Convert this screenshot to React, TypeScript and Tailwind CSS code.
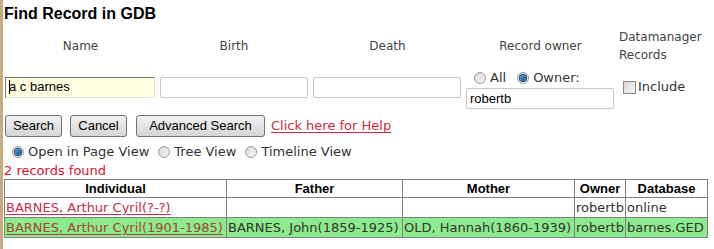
import React from 'react';

const verdana = "font-['DejaVu_Sans',Verdana,sans-serif]";
const arial = "font-['Liberation_Sans',Arial,sans-serif]";

function Radio({ checked }: { checked?: boolean }) {
  return (
    <span className="inline-flex h-[12px] w-[12px] shrink-0 items-center justify-center rounded-full border border-[#9a9a9a] bg-gradient-to-br from-[#d8d8d8] to-[#f8f8f8]">
      {checked && <span className="h-[6px] w-[6px] rounded-full bg-gradient-to-br from-[#5aa0d8] to-[#0b4f8a] ring-1 ring-[#1c3e66]" />}
    </span>
  );
}

function Btn({ children, w }: { children: React.ReactNode; w: string }) {
  return (
    <button className={`${w} h-[22px] rounded-[3px] border border-[#707070] bg-gradient-to-b from-[#f2f2f2] to-[#d6d6d6] text-[13px] text-black ${arial}`}>
      {children}
    </button>
  );
}

const rows = [
  { ind: 'BARNES, Arthur Cyril(?-?)', father: '', mother: '', owner: 'robertb', db: 'online', green: false },
  {
    ind: 'BARNES, Arthur Cyril(1901-1985)',
    father: 'BARNES, John(1859-1925)',
    mother: 'OLD, Hannah(1860-1939)',
    owner: 'robertb',
    db: 'barnes.GED',
    green: true,
  },
];

export default function App() {
  return (
    <div className="flex h-[249px] w-[714px] overflow-hidden bg-white text-black">
      <div className="w-[3px] shrink-0 bg-[#c9aa7c]" />
      <div className="flex-1 pl-[1px]">
        <h1 className={`pt-[4px] text-[16px] font-bold leading-[20px] ${arial}`}>Find Record in GDB</h1>

        {/* search form */}
        <div className={`grid grid-cols-[153px_154px_153px_153px_86px] text-[12px] text-[#444] ${verdana}`}>
          <div className="flex h-[41px] items-center justify-center pt-[2px]">Name</div>
          <div className="flex h-[41px] items-center justify-center pt-[2px]">Birth</div>
          <div className="flex h-[41px] items-center justify-center pt-[2px]">Death</div>
          <div className="flex h-[41px] items-center justify-center pt-[2px]">Record owner</div>
          <div className="flex h-[41px] items-center pl-[2px] pt-[2px] leading-[18px]">
            Datamanager
            <br />
            Records
          </div>

          <div className="flex h-[44px] items-center">
            <div className={`ml-[1px] flex h-[21px] w-[150px] items-center border border-t-[#7a7a7a] border-l-[#7a7a7a] border-r-[#e0e0e0] border-b-[#e0e0e0] bg-[#fffde0] pl-[3px] text-[13px] text-black ${arial}`}>
              <span className="mr-[-1px] h-[14px] w-[1px] bg-black" />a c barnes
            </div>
          </div>
          <div className="flex h-[44px] items-center">
            <div className="ml-[3px] h-[21px] w-[148px] rounded-[2px] border border-[#c8c8c8] bg-white" />
          </div>
          <div className="flex h-[44px] items-center">
            <div className="ml-[2px] h-[21px] w-[148px] rounded-[2px] border border-[#c8c8c8] bg-white" />
          </div>
          <div className="flex h-[44px] flex-col pt-[4px]">
            <div className="flex h-[17px] items-center gap-[4px] pl-[10px] text-[13px] text-[#333]">
              <Radio />
              <span>All</span>
              <span className="ml-[3px]" />
              <Radio checked />
              <span>Owner:</span>
            </div>
            <div className={`ml-[2px] mt-[2px] flex h-[21px] w-[148px] items-center rounded-[2px] border border-[#c8c8c8] bg-white pl-[3px] text-[13px] text-black ${arial}`}>
              robertb
            </div>
          </div>
          <div className="flex h-[44px] items-center gap-[2px] pl-[6px] text-[13px] text-[#333]">
            <span className="h-[13px] w-[13px] border border-[#8a8a8a] bg-gradient-to-br from-[#d4d4d4] to-[#f8f8f8]" />
            <span>Include</span>
          </div>
        </div>

        {/* buttons */}
        <div className="mt-[6px] flex h-[22px] items-center pl-[1px]">
          <Btn w="w-[57px]">Search</Btn>
          <span className="w-[8px]" />
          <Btn w="w-[57px]">Cancel</Btn>
          <span className="w-[9px]" />
          <Btn w="w-[129px]">Advanced Search</Btn>
          <a href="#" className={`ml-[6px] text-[13px] text-[#cc2a3c] underline underline-offset-2 ${verdana}`}>
            Click here for Help
          </a>
        </div>

        <div className={`mt-[7px] flex h-[16px] items-center gap-[4px] pl-[8px] text-[13px] text-[#333] ${verdana}`}>
          <Radio checked />
          <span>Open in Page View</span>
          <span className="w-[1px]" />
          <Radio />
          <span>Tree View</span>
          <span className="w-[1px]" />
          <Radio />
          <span>Timeline View</span>
        </div>

        <div className={`mt-[3px] h-[16px] text-[13px] leading-[16px] text-[#e0102e] ${verdana}`}>2 records found</div>

        {/* results */}
        <table className="border-collapse border border-[#808080] text-[13px]">
          <thead>
            <tr className={`h-[18px] font-bold ${arial}`}>
              <th className="w-[222px] border border-[#808080] p-0 leading-[16px]">Individual</th>
              <th className="w-[176px] border border-[#808080] p-0 leading-[16px]">Father</th>
              <th className="w-[172px] border border-[#808080] p-0 leading-[16px]">Mother</th>
              <th className="w-[51px] border border-[#808080] p-0 leading-[16px]">Owner</th>
              <th className="w-[82px] border border-[#808080] p-0 leading-[16px]">Database</th>
            </tr>
          </thead>
          <tbody className={`${verdana} text-[#333]`}>
            {rows.map((r) => (
              <tr key={r.ind} className={`h-[20px] whitespace-nowrap ${r.green ? 'bg-[#8ceb8c]' : 'bg-white'}`}>
                <td className="border border-[#808080] px-[1px] py-0 leading-[18px]">
                  <a href="#" className={`underline underline-offset-2 ${r.green ? 'text-[#a4452e]' : 'text-[#cc2a4a]'}`}>
                    {r.ind}
                  </a>
                </td>
                <td className="border border-[#808080] px-[1px] py-0 leading-[18px]">{r.father}</td>
                <td className="border border-[#808080] px-[1px] py-0 leading-[18px]">{r.mother}</td>
                <td className="border border-[#808080] px-[1px] py-0 leading-[18px]">{r.owner}</td>
                <td className="border border-[#808080] px-[1px] py-0 leading-[18px]">{r.db}</td>
              </tr>
            ))}
          </tbody>
        </table>
      </div>
    </div>
  );
}
